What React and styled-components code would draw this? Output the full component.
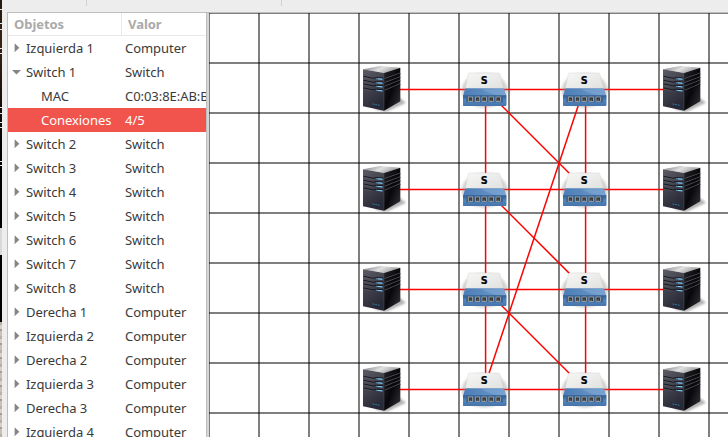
import React from "react";
import styled, { createGlobalStyle } from "styled-components";

const GlobalStyle = createGlobalStyle`
  * { box-sizing: border-box; }
  body { margin: 0; background: #ededed; overflow: hidden; }
`;

const Window = styled.div`
  display: flex;
  width: 728px;
  height: 437px;
  overflow: hidden;
  background: #ededed;
  color: #3a3a3a;
  font: 13px/24px "Noto Sans", sans-serif;
  letter-spacing: -0.05px;
`;

const Desktop = styled.div`
  flex: none;
  display: flex;
  flex-direction: column;
  width: 2px;
  background: linear-gradient(#24180f 0, #382315 45px, #1a0f08 100px, #000 150px);
`;

const Patch = styled.div`
  flex: none;
  height: ${(p) => p.$h}px;
  margin-top: ${(p) => p.$gap}px;
  background: ${(p) => p.$fill};
`;

const Main = styled.div`
  flex: 1;
  display: flex;
  flex-direction: column;
  min-width: 0;
`;

const Toolbar = styled.div`
  flex: none;
  display: flex;
  height: 12px;
`;

const ToolSeparator = styled.div`
  width: 1px;
  height: 6px;
  margin-left: ${(p) => p.$gap}px;
  background: #d0d0d0;
`;

const Body = styled.div`
  flex: 1;
  display: flex;
  min-height: 0;
  padding-left: 5px;
`;

const Tree = styled.div`
  flex: none;
  width: 200px;
  overflow: hidden;
  background: #fff;
  border: solid #bdbdbd;
  border-width: 1px 1px 0 1px;
`;

const Cells = styled.div`
  display: grid;
  grid-template-columns: 114px 84px;
  height: 24px;
  white-space: nowrap;
`;

const Header = styled(Cells)`
  grid-template-columns: 113px 85px;
  height: 23px;
  color: #aaa;
  font-weight: 700;
  line-height: 22px;
  border-bottom: 1px solid #e9e9e9;
`;

const HeaderCell = styled.div`
  padding-left: 6px;
  & + & { border-left: 1px solid #e9e9e9; }
`;

const Row = styled(Cells)`
  ${(p) => p.$selected && "background: #f0544c; color: #fff;"}
`;

const NameCell = styled.div`
  display: flex;
  align-items: center;
  padding-left: ${(p) => (p.$child ? 33 : 6)}px;
`;

const ValueCell = styled.div`
  padding-left: 3px;
  overflow: hidden;
`;

const Arrow = styled.svg`
  flex: none;
  width: 12px;
  height: 12px;
  overflow: visible;
`;

const Splitter = styled.div`
  flex: none;
  width: 2px;
  background: #d5d5d5;
  border-top: 1px solid #bdbdbd;
`;

const CanvasFrame = styled.div`
  flex: 1;
  min-width: 0;
  border-top: 1px solid #bdbdbd;
  overflow: hidden;
`;

const Canvas = styled.svg`
  display: block;
  width: 519px;
  height: 424px;
`;

const wallpaper = [
  [9, 1], [13, 1], [5, 1], [18, 1], [4, 1], [53, 1],
  [5, 1], [8, 1], [4, 1], [33, 1], [3, 1],
];

const items = [
  { name: "Izquierda 1", value: "Computer" },
  { name: "Switch 1", value: "Switch", open: true },
  { name: "MAC", value: "C0:03:8E:AB:BD", child: true },
  { name: "Conexiones", value: "4/5", child: true, selected: true },
  ...[2, 3, 4, 5, 6, 7, 8].map((n) => ({ name: `Switch ${n}`, value: "Switch" })),
  ...["Derecha 1", "Izquierda 2", "Derecha 2", "Izquierda 3", "Derecha 3", "Izquierda 4"].map(
    (name) => ({ name, value: "Computer" })
  ),
];

function Expander({ open }) {
  return (
    <Arrow viewBox="0 0 12 12">
      <path d={open ? "M-2 4H7L2.5 8.5Z" : "M.6 1.3L5.3 5.7L.6 10.2Z"} fill="#858585" />
    </Arrow>
  );
}

// Drawn at three units per pixel.
function Server({ x, y }) {
  return (
    <g transform={`translate(${x} ${y}) scale(.33333)`}>
      <path d="M72 162L145 125L168 143L108 171Z" fill="#666" opacity=".5" filter="url(#soft)" />
      <path d="M39 43L91 33L151 38L103 54Z" fill="url(#lid)" />
      <path d="M39 43L102 54V167L39 154Z" fill="url(#front)" />
      <path d="M102 54L151 38V139L102 167Z" fill="url(#side)" />
      <path d="M102 55V164" stroke="#50525c" strokeWidth="1.5" />
      {[0, 12, 23, 35].map((d, i) => (
        <g key={d} transform={`translate(0 ${d})`} fill="none">
          <path d="M41 64L70 70L77 68L100 69" stroke="#15161e" strokeWidth="3" />
          <path d="M42 67L70 73" stroke="#6d6e78" strokeWidth="1.2" opacity=".7" />
          <path d="M78 71L99 73" stroke="#4c9bd0" strokeWidth="3.2" />
          <path d="M84 71.5L96 72.5" stroke="#c3ebff" strokeWidth="1.8" />
          <path d={`M104 71L151 ${54 - i}`} stroke="#a0a0a6" strokeWidth="2" opacity=".65" />
          <path d={`M104 74L151 ${57 - i}`} stroke="#08080b" strokeWidth="2.5" />
        </g>
      ))}
      <path d="M68 147L90 151" stroke="#2f7fae" strokeWidth="3.2" strokeDasharray="5 3" />
    </g>
  );
}

function Switch({ x, y }) {
  return (
    <g transform={`translate(${x} ${y}) scale(.33333)`}>
      <ellipse cx="89" cy="91" rx="69" ry="52" fill="#888" opacity=".38" filter="url(#soft)" />
      <path d="M43 39H131Q134 39 135 43L146 88H30L40 42Q40 39 43 39Z" fill="url(#cover)" stroke="#c9cac8" />
      <path d="M31 85H146L154 108V134Q154 138 150 138H28Q24 138 24 134V108Z" fill="url(#blueTop)" />
      <path d="M80 88H145L152 107Q108 107 80 88Z" fill="#8bb2dd" opacity=".4" />
      <path d="M24 106H154V134Q154 138 150 138H28Q24 138 24 134Z" fill="url(#blueFront)" />
      <path d="M34 108H144V127H34Z" fill="#3a6496" />
      {[39, 60, 80, 101, 122].map((px) => (
        <g key={px} transform={`translate(${px} 110)`}>
          <path d="M0 0H15V15H0Z" fill="#b4b6b4" />
          <path d="M2 2H13V13H2Z" fill="#3a3b39" />
          <path d="M5 9H10V12H5Z" fill="#777973" />
        </g>
      ))}
      <text
        x="88"
        y="71"
        textAnchor="middle"
        fontFamily="DejaVu Sans"
        fontWeight="700"
        fontSize="29"
        stroke="#000"
        strokeWidth=".6"
      >
        S
      </text>
    </g>
  );
}

function Network() {
  const lines = [0, 1, 2, 3, 4, 5, 6, 7, 8, 9, 10];
  const rows = [0, 100, 200, 300];
  return (
    <Canvas viewBox="209 13 519 424">
      <defs>
        <filter id="soft" x="-20%" y="-30%" width="140%" height="160%">
          <feGaussianBlur stdDeviation="3.5" />
        </filter>
        <linearGradient id="lid" x1="0" y1="0" x2="1" y2=".3">
          <stop offset="0" stopColor="#77777b" />
          <stop offset=".55" stopColor="#e0e0e0" />
          <stop offset="1" stopColor="#99999b" />
        </linearGradient>
        <linearGradient id="front" x1="0" y1="0" x2=".4" y2="1">
          <stop offset="0" stopColor="#5b5c64" />
          <stop offset=".5" stopColor="#42434d" />
          <stop offset="1" stopColor="#282936" />
        </linearGradient>
        <linearGradient id="side" x1="0" y1="0" x2="1" y2="1">
          <stop offset="0" stopColor="#25252a" />
          <stop offset=".5" stopColor="#08080c" />
          <stop offset="1" stopColor="#34343b" />
        </linearGradient>
        <linearGradient id="cover" x1="0" y1="0" x2="1" y2="1">
          <stop offset="0" stopColor="#f7f7f6" />
          <stop offset="1" stopColor="#e0e1de" />
        </linearGradient>
        <linearGradient id="blueTop" x1="0" y1="0" x2="1" y2="0">
          <stop offset="0" stopColor="#4c7db5" />
          <stop offset="1" stopColor="#6d9aca" />
        </linearGradient>
        <linearGradient id="blueFront" x1="0" y1="0" x2="0" y2="1">
          <stop offset="0" stopColor="#315e94" />
          <stop offset=".5" stopColor="#5485b9" />
          <stop offset="1" stopColor="#4474aa" />
        </linearGradient>
      </defs>
      <path d="M209 13H728V437H209Z" fill="#fff" />
      <g stroke="#000" strokeOpacity=".5" strokeWidth="2">
        {lines.map((n) => <path key={`v${n}`} d={`M${209 + n * 50} 13V437`} />)}
        {lines.slice(0, 9).map((n) => <path key={`h${n}`} d={`M209 ${13 + n * 50}H728`} />)}
      </g>
      <g stroke="#ff0000" strokeWidth="1.5">
        {rows.map((y) => <path key={y} d={`M383 ${89.5 + y}H683`} />)}
        <path d="M485.6 89V389M585.6 89V389" />
        {rows.slice(0, 3).map((y) => <path key={y} d={`M485.5 ${89.5 + y}l100 100`} />)}
        <path d="M583.6 89.5L483.6 389.5" />
      </g>
      {rows.map((y) => (
        <g key={y}>
          <Server x={350} y={55 + y} />
          <Switch x={455} y={60 + y} />
          <Switch x={555} y={60 + y} />
          <Server x={650} y={55 + y} />
        </g>
      ))}
    </Canvas>
  );
}

export default function App() {
  return (
    <>
      <GlobalStyle />
      <Window>
        <Desktop>
          {wallpaper.map(([gap, h], i) => <Patch key={i} $gap={gap} $h={h} $fill="#e5e5e5" />)}
          <Patch $gap={62} $h={27} $fill="#d9d9d9" />
          <Patch $gap={67} $h={115} $fill="repeating-linear-gradient(#b9afa5 0 3px, #d7d0c8 3px 7px, #a69b90 7px 9px, #c9c0b6 9px 14px)" />
        </Desktop>
        <Main>
          <Toolbar>
            <ToolSeparator $gap={84} />
            <ToolSeparator $gap={194} />
          </Toolbar>
          <Body>
            <Tree>
              <Header>
                <HeaderCell>Objetos</HeaderCell>
                <HeaderCell>Valor</HeaderCell>
              </Header>
              {items.map((item) => (
                <Row key={item.name} $selected={item.selected}>
                  <NameCell $child={item.child}>
                    {!item.child && <Expander open={item.open} />}
                    {item.name}
                  </NameCell>
                  <ValueCell>{item.value}</ValueCell>
                </Row>
              ))}
            </Tree>
            <Splitter />
            <CanvasFrame>
              <Network />
            </CanvasFrame>
          </Body>
        </Main>
      </Window>
    </>
  );
}
